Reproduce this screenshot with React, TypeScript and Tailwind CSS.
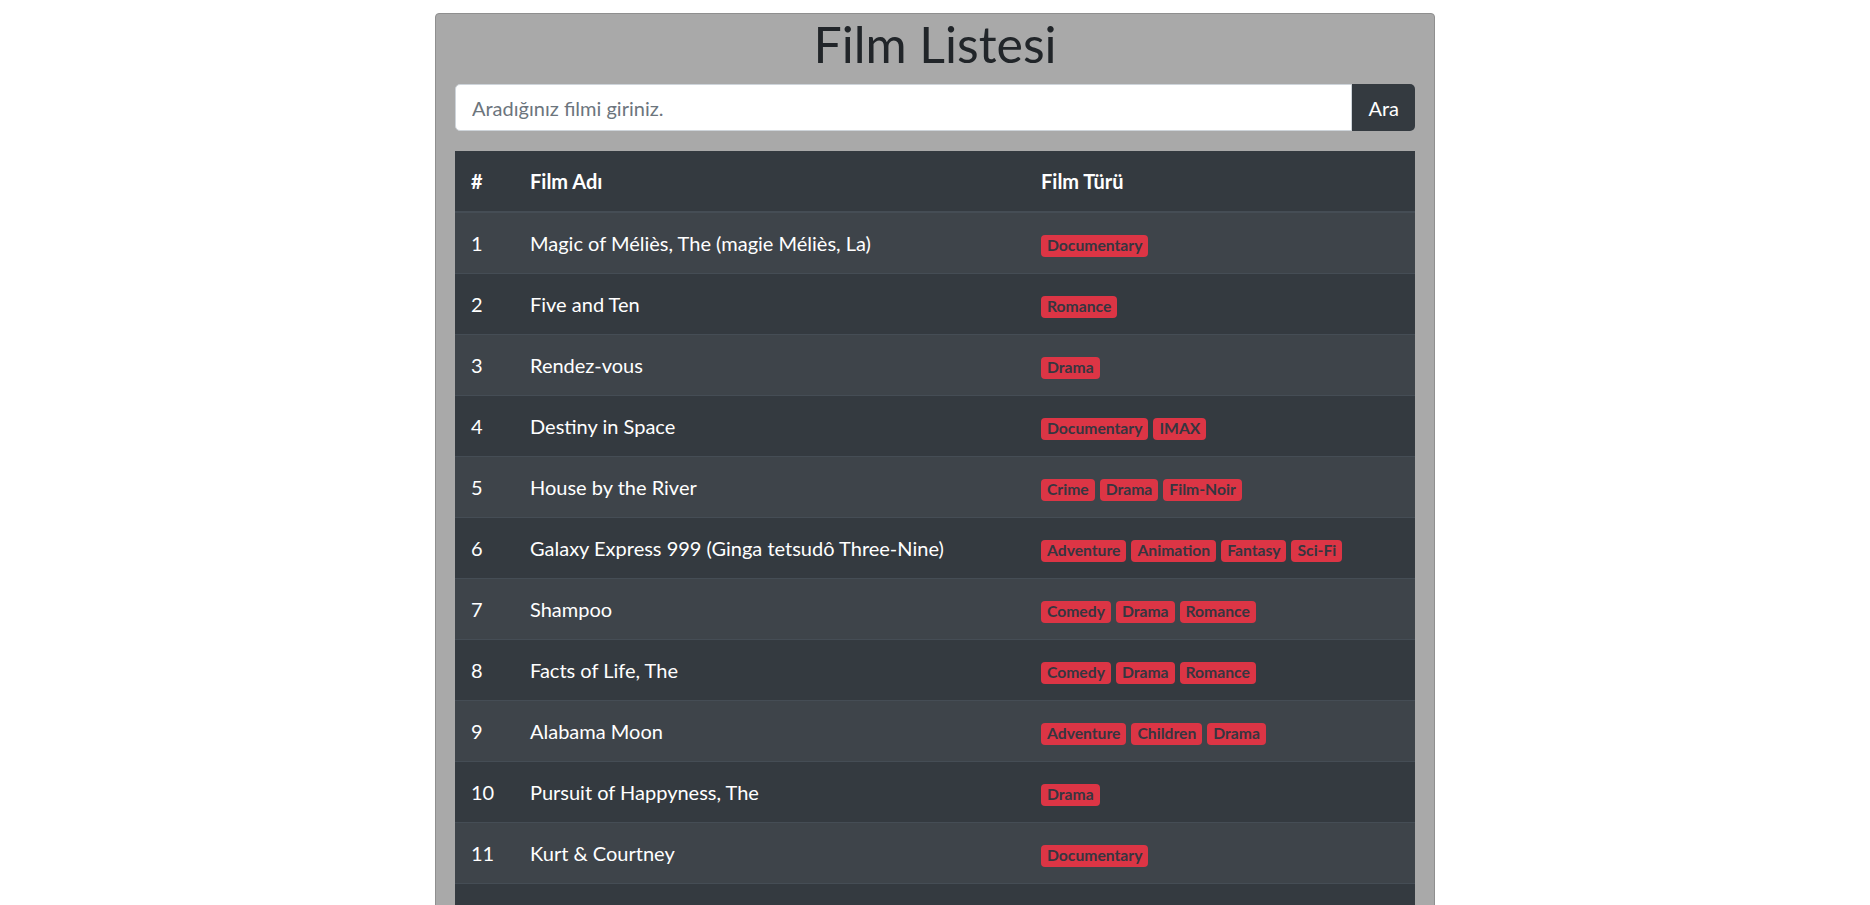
import React from "react";

type Film = { id: number; name: string; genres: string[] };

const films: Film[] = [
  { id: 1, name: "Magic of Méliès, The (magie Méliès, La)", genres: ["Documentary"] },
  { id: 2, name: "Five and Ten", genres: ["Romance"] },
  { id: 3, name: "Rendez-vous", genres: ["Drama"] },
  { id: 4, name: "Destiny in Space", genres: ["Documentary", "IMAX"] },
  { id: 5, name: "House by the River", genres: ["Crime", "Drama", "Film-Noir"] },
  { id: 6, name: "Galaxy Express 999 (Ginga tetsudô Three-Nine)", genres: ["Adventure", "Animation", "Fantasy", "Sci-Fi"] },
  { id: 7, name: "Shampoo", genres: ["Comedy", "Drama", "Romance"] },
  { id: 8, name: "Facts of Life, The", genres: ["Comedy", "Drama", "Romance"] },
  { id: 9, name: "Alabama Moon", genres: ["Adventure", "Children", "Drama"] },
  { id: 10, name: "Pursuit of Happyness, The", genres: ["Drama"] },
  { id: 11, name: "Kurt & Courtney", genres: ["Documentary"] },
  { id: 12, name: "Tiger Bay", genres: ["Crime", "Drama", "Thriller"] },
  { id: 13, name: "Paper Moon", genres: ["Comedy", "Crime", "Drama"] },
];

const Badge = ({ label }: { label: string }) => (
  <span className="inline-block rounded-[4px] bg-[#dc3545] px-[6px] py-[3.5px] text-[15.7px] leading-[15px] font-bold text-[#363640]">
    {label}
  </span>
);

export default function App() {
  return (
    <div
      className="min-h-screen bg-white"
      style={{ fontFamily: "Lato, 'Noto Sans', sans-serif" }}
    >
      <div className="mx-auto mt-[13px] w-[1000px] rounded-[4px] border border-[#8f8f8f] bg-[#a9a9a9] px-[19px] pb-4">
        <h1 className="mb-[10px] text-center text-[50px] leading-[1.2] font-normal text-[#212529]">
          Film Listesi
        </h1>

        <div className="flex h-[47px]">
          <input
            type="text"
            placeholder="Aradığınız filmi giriniz."
            className="h-full flex-1 rounded-l-[5px] border border-[#ced4da] bg-white px-4 text-[20px] text-[#495057] placeholder:text-[#6c757d] outline-none"
          />
          <button className="h-full rounded-r-[5px] bg-[#343a40] px-4 text-[20px] text-white">
            Ara
          </button>
        </div>

        <table className="mt-[20px] w-full table-fixed border-collapse bg-[#343a40] text-[20px] text-white">
          <colgroup>
            <col className="w-[59px]" />
            <col className="w-[511px]" />
            <col />
          </colgroup>
          <thead>
            <tr className="border-b-2 border-[#454d55]">
              <th className="h-[61px] pl-4 text-left font-bold">#</th>
              <th className="h-[61px] pl-4 text-left font-bold">Film Adı</th>
              <th className="h-[61px] pl-4 text-left font-bold">Film Türü</th>
            </tr>
          </thead>
          <tbody>
            {films.map((f) => (
              <tr
                key={f.id}
                className={`border-b border-[#454d55] ${f.id % 2 === 1 ? "bg-[#3e444a]" : "bg-[#343a40]"}`}
              >
                <td className="h-[61px] pl-4 leading-[30px]">{f.id}</td>
                <td className="h-[61px] pl-4 leading-[30px]">{f.name}</td>
                <td className="h-[61px] pl-4 leading-[30px]">
                  <div className="flex flex-wrap gap-[5px] pt-[6px]">
                    {f.genres.map((g) => (
                      <Badge key={g} label={g} />
                    ))}
                  </div>
                </td>
              </tr>
            ))}
          </tbody>
        </table>
      </div>
    </div>
  );
}
